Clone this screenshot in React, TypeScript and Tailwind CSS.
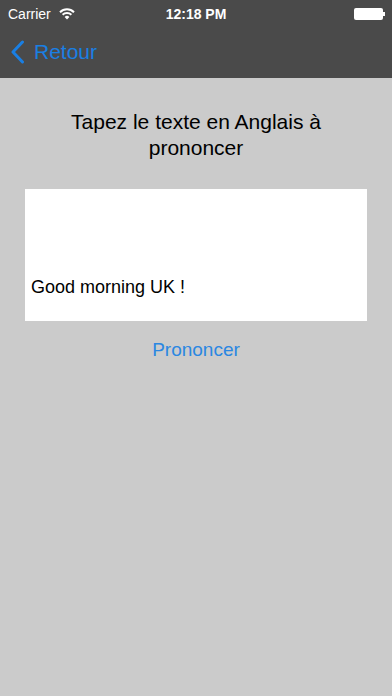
export default function App() {
  const font = { fontFamily: '"Liberation Sans", Arial, sans-serif' };
  return (
    <div className="w-[392px] h-[696px] bg-[#cbcbcb] flex flex-col" style={font}>
      <div className="bg-[#4a4a4a] h-[78px] flex flex-col">
        <div className="h-[28px] relative flex items-center px-[8px] text-white text-[14px]">
          <span>Carrier</span>
          <svg className="ml-[8px]" width="16" height="12" viewBox="0 0 16 12">
            <path d="M1 4.2 A10 10 0 0 1 15 4.2" stroke="white" strokeWidth="2" fill="none" />
            <path d="M3.6 6.8 A6.4 6.4 0 0 1 12.4 6.8" stroke="white" strokeWidth="2" fill="none" />
            <path d="M8 11.5 L5.6 9 A3.4 3.4 0 0 1 10.4 9 Z" fill="white" />
          </svg>
          <span className="absolute left-0 right-0 text-center font-bold text-[14px] pointer-events-none">12:18 PM</span>
          <div className="ml-auto flex items-center mr-[-1px]">
            <div className="w-[29px] h-[12px] bg-white rounded-[2px]" />
            <div className="w-[2px] h-[4px] bg-white" />
          </div>
        </div>
        <div className="flex-1 flex items-center pl-[10px] pb-[2px]">
          <svg width="15" height="24" viewBox="0 0 15 24">
            <path d="M12.5 2 L3 12 L12.5 22" stroke="#1a7fe3" strokeWidth="3" fill="none" strokeLinecap="round" strokeLinejoin="round" />
          </svg>
          <span className="ml-[9px] text-[#1a7fe3] text-[21px]">Retour</span>
        </div>
      </div>
      <div className="flex flex-col items-center pt-[31px]">
        <div className="text-center text-black text-[21px] leading-[26px] w-[320px]">
          Tapez le texte en Anglais à prononcer
        </div>
        <div className="mt-[28px] w-[342px] h-[132px] bg-white flex items-end px-[6px] pb-[20px] text-black text-[18px]">
          Good morning UK !
        </div>
        <div className="mt-[15px] text-[#2a87e2] text-[19px]">Prononcer</div>
      </div>
    </div>
  );
}
